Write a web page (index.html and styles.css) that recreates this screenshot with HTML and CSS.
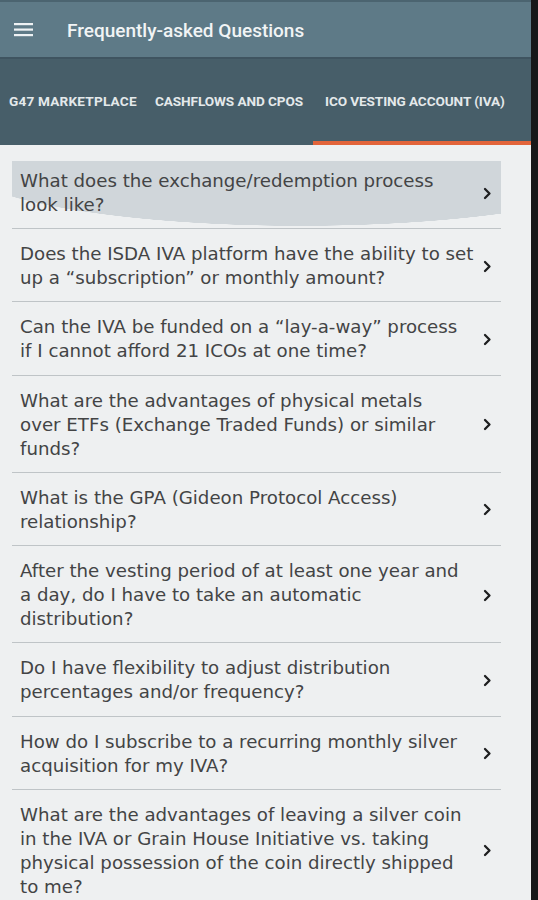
FILE: index.html
```html
<!DOCTYPE html>
<html>
<head>
<meta charset="utf-8">
<link rel="stylesheet" href="styles.css">
</head>
<body>
<div class="screen">
  <div class="app">
    <header class="topbar">
      <svg class="menu" width="20" height="14" viewBox="0 0 20 14"><rect x="0" y="0" width="19" height="2.2" fill="#eef2f4"/><rect x="0" y="5.5" width="19" height="2.2" fill="#eef2f4"/><rect x="0" y="11" width="19" height="2.2" fill="#eef2f4"/></svg>
      <h1 class="title">Frequently-asked Questions</h1>
    </header>
    <nav class="tabs">
      <div class="tab t1">G47 MARKETPLACE</div>
      <div class="tab t2">CASHFLOWS AND CPOS</div>
      <div class="tab t3 active">ICO VESTING ACCOUNT (IVA)</div>
    </nav>
    <main class="content">
      <ul class="faq">
        <li class="item pressed"><span class="q">What does the exchange/redemption process<br>look like?</span><svg class="chev" width="9" height="13" viewBox="0 0 9 13"><path d="M2 2 L6.5 6.5 L2 11" fill="none" stroke="#1e1f20" stroke-width="2.3" stroke-linejoin="round" stroke-linecap="round"/></svg></li>
        <li class="item"><span class="q">Does the ISDA IVA platform have the ability to set<br>up a “subscription” or monthly amount?</span><svg class="chev" width="9" height="13" viewBox="0 0 9 13"><path d="M2 2 L6.5 6.5 L2 11" fill="none" stroke="#1e1f20" stroke-width="2.3" stroke-linejoin="round" stroke-linecap="round"/></svg></li>
        <li class="item"><span class="q">Can the IVA be funded on a “lay-a-way” process<br>if I cannot afford 21 ICOs at one time?</span><svg class="chev" width="9" height="13" viewBox="0 0 9 13"><path d="M2 2 L6.5 6.5 L2 11" fill="none" stroke="#1e1f20" stroke-width="2.3" stroke-linejoin="round" stroke-linecap="round"/></svg></li>
        <li class="item"><span class="q">What are the advantages of physical metals<br>over ETFs (Exchange Traded Funds) or similar<br>funds?</span><svg class="chev" width="9" height="13" viewBox="0 0 9 13"><path d="M2 2 L6.5 6.5 L2 11" fill="none" stroke="#1e1f20" stroke-width="2.3" stroke-linejoin="round" stroke-linecap="round"/></svg></li>
        <li class="item"><span class="q">What is the GPA (Gideon Protocol Access)<br>relationship?</span><svg class="chev" width="9" height="13" viewBox="0 0 9 13"><path d="M2 2 L6.5 6.5 L2 11" fill="none" stroke="#1e1f20" stroke-width="2.3" stroke-linejoin="round" stroke-linecap="round"/></svg></li>
        <li class="item"><span class="q">After the vesting period of at least one year and<br>a day, do I have to take an automatic<br>distribution?</span><svg class="chev" width="9" height="13" viewBox="0 0 9 13"><path d="M2 2 L6.5 6.5 L2 11" fill="none" stroke="#1e1f20" stroke-width="2.3" stroke-linejoin="round" stroke-linecap="round"/></svg></li>
        <li class="item"><span class="q">Do I have flexibility to adjust distribution<br>percentages and/or frequency?</span><svg class="chev" width="9" height="13" viewBox="0 0 9 13"><path d="M2 2 L6.5 6.5 L2 11" fill="none" stroke="#1e1f20" stroke-width="2.3" stroke-linejoin="round" stroke-linecap="round"/></svg></li>
        <li class="item"><span class="q">How do I subscribe to a recurring monthly silver<br>acquisition for my IVA?</span><svg class="chev" width="9" height="13" viewBox="0 0 9 13"><path d="M2 2 L6.5 6.5 L2 11" fill="none" stroke="#1e1f20" stroke-width="2.3" stroke-linejoin="round" stroke-linecap="round"/></svg></li>
        <li class="item"><span class="q">What are the advantages of leaving a silver coin<br>in the IVA or Grain House Initiative vs. taking<br>physical possession of the coin directly shipped<br>to me?</span><svg class="chev" width="9" height="13" viewBox="0 0 9 13"><path d="M2 2 L6.5 6.5 L2 11" fill="none" stroke="#1e1f20" stroke-width="2.3" stroke-linejoin="round" stroke-linecap="round"/></svg></li>
      </ul>
    </main>
  </div>
  <div class="edge"></div>
</div>
</body>
</html>
```
FILE: styles.css
```css
html, body {
  margin: 0;
  padding: 0;
  height: 900px;
  overflow: hidden;
  background: #eef0f1;
}
.screen {
  display: flex;
  width: 538px;
  height: 900px;
}
.app {
  width: 531px;
  display: flex;
  flex-direction: column;
  background: #eef0f1;
}
.edge {
  width: 7px;
  background: #161819;
}
.topbar {
  flex-shrink: 0;
  height: 59px;
  padding-top: 2px;
  background: #5e7a87;
  border-top: 2px solid #4b6470;
  border-bottom: 2px solid #3f5460;
  box-sizing: border-box;
  display: flex;
  align-items: center;
}
.menu {
  margin-left: 14px;
  margin-top: -1px;
}
.title {
  margin: 0 0 0 33px;
  font-family: Roboto, "Liberation Sans", sans-serif;
  font-weight: 500;
  font-size: 19px;
  color: #f1f4f5;
}
.tabs {
  flex-shrink: 0;
  height: 86px;
  background: #475e69;
  display: flex;
  padding-left: 1px;
  box-sizing: border-box;
}
.tab {
  display: flex;
  align-items: center;
  font-family: Roboto, "Liberation Sans", sans-serif;
  font-weight: 700;
  font-size: 13.6px;
  color: #e4e9eb;
  white-space: nowrap;
  letter-spacing: -0.1px;
  box-sizing: border-box;
  padding-bottom: 2px;
}
.t1 { width: 143px; padding-left: 8px; letter-spacing: 0.2px; }
.t2 { width: 169px; padding-left: 11px; }
.t3 { width: 218px; padding-left: 12px; }
.tab.active {
  border-bottom: 4px solid #e2643a;
  padding-top: 2px;
  padding-bottom: 0;
}
.content {
  flex: 1;
  padding: 11px 30px 0 12px;
}
.faq {
  list-style: none;
  margin: 0;
  padding: 0;
}
.item {
  display: flex;
  align-items: center;
  justify-content: space-between;
  padding: 13px 0 11px 8px;
  border-bottom: 1.5px solid #bfc4c7;
  font-family: "DejaVu Sans", sans-serif;
  font-size: 18.2px;
  line-height: 24.1px;
  color: #434445;
}
.item.pressed {
  background:
    linear-gradient(#eef0f1 0 5px, transparent 5px),
    radial-gradient(ellipse 345px 65px at 288px 5px, #d0d6da 99.5%, transparent 100%);
}
.q {
  white-space: nowrap;
}
.chev {
  margin-right: 9px;
  flex-shrink: 0;
}
```
